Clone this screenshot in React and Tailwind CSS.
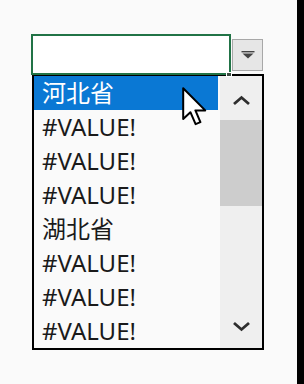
import React from 'react';

const items = ['河北省', '#VALUE!', '#VALUE!', '#VALUE!', '湖北省', '#VALUE!', '#VALUE!', '#VALUE!'];

function Chevron({ up }) {
  return (
    <svg width="19" height="11" viewBox="0 0 19 11">
      <path
        d={up ? 'M2 9 L9.5 2.5 L17 9' : 'M2 2 L9.5 8.5 L17 2'}
        fill="none"
        stroke="#2e2e2e"
        strokeWidth="2.8"
      />
    </svg>
  );
}

function Cursor() {
  return (
    <svg className="absolute left-[182px] top-[87px]" width="26" height="40" viewBox="0 0 13 20">
      <path
        d="M0.6 0.6 L0.6 16 L4.2 12.6 L6.8 18.6 L9.2 17.6 L6.7 11.7 L11.6 11.7 Z"
        fill="#fff"
        stroke="#000"
        strokeWidth="1"
        strokeLinejoin="round"
      />
    </svg>
  );
}

export default function App() {
  return (
    <div className="flex w-[304px] h-[384px] bg-[#fafafa]" style={{ fontFamily: '"Noto Sans", "Noto Sans CJK SC", sans-serif' }}>
      <div className="relative flex-1">
        {/* cell + dropdown button */}
        <div className="flex items-start ml-[31px] mt-[34px]">
          <div className="relative w-[200px] h-[41px] border-2 border-[#217346] bg-white">
            <div className="absolute -right-[3px] -bottom-[4px] w-[6px] h-[5px] bg-[#3a4a40] border border-white"></div>
          </div>
          <div className="flex items-center justify-center w-[31px] h-[32px] mt-[5px] ml-[1px] bg-[#e6e6e6] border border-[#a8a8a8]">
            <svg width="14" height="8" viewBox="0 0 14 8">
              <rect x="0.5" y="0" width="13" height="1.4" fill="#444" />
              <path d="M1.5 2.6 L12.5 2.6 L7 7.6 Z" fill="#444" />
            </svg>
          </div>
        </div>

        {/* list box */}
        <div className="flex ml-[32px] -mt-[1px] w-[232px] border-2 border-black bg-[#fafafa]">
          <div className="flex-1">
            {items.map((t, i) => (
              <div
                key={i}
                className={`flex items-center h-[34px] pl-[8px] text-[24px] leading-none ${
                  i === 0 ? 'bg-[#0a78d4] text-white' : 'text-[#1a1a1a]'
                }`}
              >
                {t}
              </div>
            ))}
          </div>
          <div className="flex flex-col w-[42px] ml-[2px] bg-[#efefef]">
            <div className="flex items-center justify-center h-[44px] pt-[4px]">
              <Chevron up />
            </div>
            <div className="h-[86px] bg-[#cdcdcd]"></div>
            <div className="flex-1"></div>
            <div className="flex items-center justify-center h-[44px]">
              <Chevron />
            </div>
          </div>
        </div>

        <Cursor />
      </div>
      <div className="w-[7px] bg-black"></div>
    </div>
  );
}
